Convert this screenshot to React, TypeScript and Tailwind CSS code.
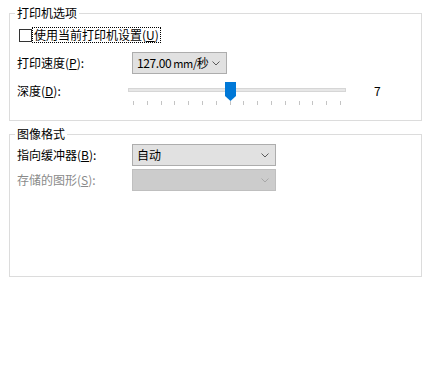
import React from "react";

const Chevron = ({ color = "#5a5a5a" }: { color?: string }) => (
  <svg width="8" height="5" viewBox="0 0 8 5" className="block shrink-0">
    <path d="M0.5 0.5 L4 4 L7.5 0.5" fill="none" stroke={color} strokeWidth="1" />
  </svg>
);

function Select({
  width,
  text,
  disabled,
}: {
  width: string;
  text?: React.ReactNode;
  disabled?: boolean;
}) {
  return (
    <div
      className={
        "h-[22px] flex items-center justify-between pl-[4px] pr-[6px] border " +
        width +
        (disabled ? " bg-[#cccccc] border-[#bfbfbf]" : " bg-[#e1e1e1] border-[#adadad]")
      }
    >
      <span className="leading-[16px] text-black whitespace-nowrap">{text}</span>
      <Chevron color={disabled ? "#a8a8a8" : "#5a5a5a"} />
    </div>
  );
}

export default function App() {
  const ticks = Array.from({ length: 16 });
  return (
    <div
      className="w-[431px] h-[366px] bg-white pt-[5px] pl-[9px] text-[12px] text-black"
      style={{ fontFamily: '"Noto Sans CJK SC", "Noto Sans", sans-serif' }}
    >
      <fieldset className="w-[413px] h-[116px] border border-[#dcdcdc] pl-[7px]">
        <legend className="-ml-[2px] px-[2px] leading-[16px]">打印机选项</legend>
        <div className="mt-[6px] h-[16px] flex items-center">
          <div className="ml-[2px] w-[13px] h-[13px] border border-[#333333] bg-white" />
          <span className="ml-[1px] px-[1px] leading-[14px] outline outline-1 outline-dotted outline-black whitespace-nowrap">
            使用当前打印机设置(<u>U</u>)
          </span>
        </div>
        <div className="mt-[9px] flex items-center">
          <span className="w-[115px] leading-[16px] whitespace-nowrap">
            打印速度(<u>P</u>):
          </span>
          <Select
            width="w-[95px]"
            text={
              <>
                <span className="text-[12px] tracking-[-0.4px]">127.00</span>
                <span className="text-[11px] tracking-[-0.4px]"> mm/</span>秒
              </>
            }
          />
        </div>
        <div className="mt-[8px] flex items-start">
          <span className="w-[111px] mt-[1px] leading-[16px] whitespace-nowrap">
            深度(<u>D</u>):
          </span>
          <div className="relative w-[218px] h-[24px]">
            <div className="absolute left-0 right-0 top-[6px] h-[4px] bg-[#e7e7e7] border border-[#d6d6d6]" />
            <div className="absolute left-[5px] right-[5px] top-[19px] h-[4px] flex justify-between">
              {ticks.map((_, i) => (
                <div key={i} className="w-px h-[4px] bg-[#c4c4c4]" />
              ))}
            </div>
            <svg
              className="absolute left-[97px] top-0"
              width="11"
              height="19"
              viewBox="0 0 11 19"
            >
              <path d="M0 0 H11 V14 L5.5 19 L0 14 Z" fill="#0078d7" />
            </svg>
          </div>
          <span className="ml-[28px] mt-[1px] leading-[16px]">7</span>
        </div>
      </fieldset>
      <fieldset className="mt-[5px] w-[413px] h-[151px] border border-[#dcdcdc] pl-[7px]">
        <legend className="-ml-[2px] px-[2px] leading-[16px]">图像格式</legend>
        <div className="mt-[2px] flex items-center">
          <span className="w-[115px] leading-[16px] whitespace-nowrap">
            指向缓冲器(<u>B</u>):
          </span>
          <Select width="w-[144px]" text="自动" />
        </div>
        <div className="mt-[3px] flex items-center">
          <span className="w-[115px] leading-[16px] text-[#8a8a8a] whitespace-nowrap">
            存储的图形(<u>S</u>):
          </span>
          <Select width="w-[144px]" disabled />
        </div>
      </fieldset>
    </div>
  );
}
